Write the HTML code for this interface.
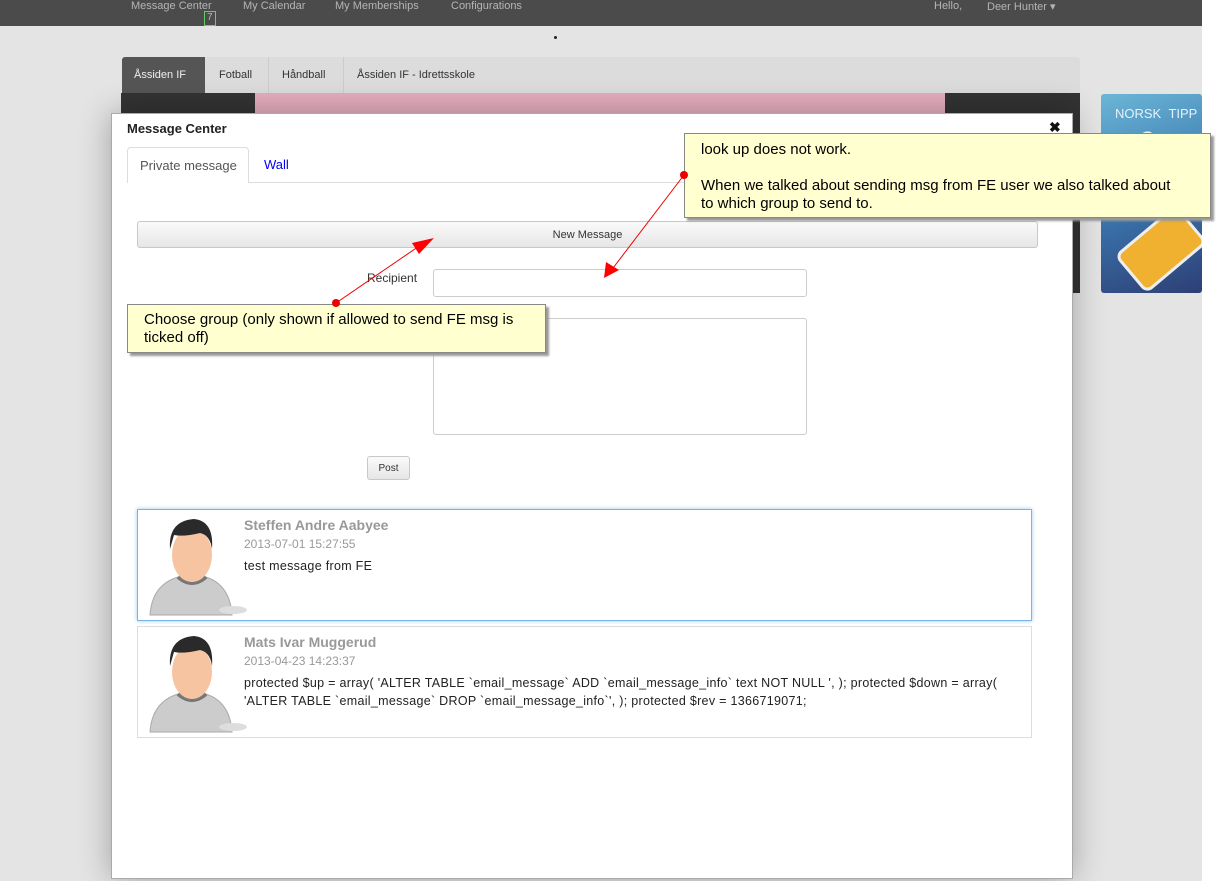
<!DOCTYPE html>
<html><head><meta charset="utf-8"><style>
*{box-sizing:border-box;margin:0;padding:0}
body{width:1221px;height:881px;overflow:hidden;background:#e4e4e4;font-family:"Liberation Sans",sans-serif;position:relative}
.abs{position:absolute}
.top{left:0;top:0;width:1202px;height:26px;background:#4b4b4b;color:#b5b5b5;font-size:11px}
.top span{position:absolute;top:0}
.note{position:absolute;background:#ffffd0;border:1px solid #888;box-shadow:3px 3px 2px #999;font-size:15px;color:#000;line-height:18px}
.btn{border:1px solid #c8c8c8;border-radius:3px;background:linear-gradient(#fafafa,#e6e6e6);font-size:11px;color:#333;text-align:center}
.inp{border:1px solid #ccc;border-radius:3px;background:#fff}
.msg{position:absolute;left:137px;width:895px;border:1px solid #ddd;background:#fff}
.msg .n{position:absolute;left:106px;top:7px;font-weight:bold;color:#999;font-size:14px}
.msg .d{position:absolute;left:106px;top:27px;color:#999;font-size:12px}
.msg .t{position:absolute;left:106px;top:47px;color:#222;font-size:12.5px;letter-spacing:0.3px;line-height:18px;width:790px;white-space:nowrap}
.msg svg{position:absolute;left:10px;top:5px}
</style></head><body>
<div class="abs top">
<span style="left:131px">Message Center</span>
<span style="left:204px;top:11px;border:1px solid #6c6;font-size:10px;padding:0 2px;color:#9c9;height:15px">7</span>
<span style="left:243px">My Calendar</span>
<span style="left:335px">My Memberships</span>
<span style="left:451px">Configurations</span>
<span style="left:934px">Hello,</span>
<span style="left:987px">Deer Hunter ▾</span>
</div>
<div class="abs" style="left:1202px;top:0;width:19px;height:881px;background:#fff"></div>
<div class="abs" style="left:554px;top:36px;width:3px;height:3px;background:#222;border-radius:2px"></div>
<div class="abs" style="left:122px;top:57px;width:958px;height:36px;background:#dcdcdc;border-radius:3px 3px 0 0;font-size:11px;color:#333">
<div class="abs" style="left:0;top:0;width:83px;height:36px;background:#555;color:#eee;border-radius:3px 0 0 0;padding:12px 12px">Åssiden IF</div>
<div class="abs" style="left:97px;top:12px">Fotball</div>
<div class="abs" style="left:146px;top:0;width:1px;height:36px;background:#ccc"></div>
<div class="abs" style="left:160px;top:12px">Håndball</div>
<div class="abs" style="left:221px;top:0;width:1px;height:36px;background:#ccc"></div>
<div class="abs" style="left:235px;top:12px">Åssiden IF - Idrettsskole</div>
</div>
<div class="abs" style="left:121px;top:93px;width:959px;height:200px;background:#333"></div>
<div class="abs" style="left:255px;top:93px;width:690px;height:20px;background:#e5aebf"></div>
<div class="abs" style="left:1101px;top:94px;width:101px;height:199px;border-radius:3px;background:linear-gradient(160deg,#6bb6d6 0%,#3b78b0 50%,#2d3f75 100%);overflow:hidden">
<div class="abs" style="left:14px;top:12px;color:#e8f0f8;font-size:13px">NORSK &nbsp;TIPP</div>
<div class="abs" style="left:15px;top:50px;width:70px;height:60px;background:#9fd4a8;transform:rotate(45deg);border-radius:8px;border:3px solid #eee"></div>
<div class="abs" style="left:20px;top:130px;width:80px;height:50px;background:#f0b030;transform:rotate(-40deg);border-radius:8px;border:3px solid #eee"></div>
</div>
<div class="abs" style="left:111px;top:113px;width:962px;height:766px;background:#fff;border:1px solid #aaa;box-shadow:0 0 30px rgba(0,0,0,.3)"></div>
<div class="abs" style="left:127px;top:121px;font-weight:bold;font-size:13px;color:#222">Message Center</div>
<div class="abs" style="left:1049px;top:119px;font-weight:bold;font-size:14px;color:#111">✖</div>
<div class="abs" style="left:127px;top:182px;width:910px;height:1px;background:#ddd"></div>
<div class="abs" style="left:127px;top:147px;width:122px;height:36px;border:1px solid #ddd;border-bottom:none;background:#fff;border-radius:4px 4px 0 0;font-size:13px;color:#555;padding:10px 12px;white-space:nowrap">Private message</div>
<div class="abs" style="left:264px;top:157px;font-size:13px;color:#00f">Wall</div>
<div class="abs btn" style="left:137px;top:221px;width:901px;height:27px;padding-top:7px">New Message</div>
<div class="abs" style="left:367px;top:271px;font-size:12px;color:#333">Recipient</div>
<div class="abs inp" style="left:433px;top:269px;width:374px;height:28px"></div>
<div class="abs inp" style="left:433px;top:318px;width:374px;height:117px"></div>
<div class="abs btn" style="left:367px;top:456px;width:43px;height:24px;padding-top:6px;font-size:10px">Post</div>
<svg width="0" height="0" style="position:absolute"><defs><g id="av">
<path d="M2 100 Q4 70 30 62 L58 62 Q82 70 84 100 Z" fill="#ccc" stroke="#aaa"/>
<path d="M30 62 Q44 74 58 62" fill="none" stroke="#777" stroke-width="4"/>
<ellipse cx="44" cy="40" rx="20" ry="27" fill="#f6c4a0"/>
<path d="M22 34 Q20 6 46 4 Q66 6 64 34 Q62 20 52 18 Q36 22 26 20 Z" fill="#2a2a2a"/>
<ellipse cx="85" cy="95" rx="14" ry="4" fill="#ddd"/>
</g></defs></svg>
<div class="msg" style="top:509px;height:112px;border-color:#7ab3e8;box-shadow:0 0 4px #9cc8f0">
<svg width="100" height="106"><use href="#av"/></svg>
<div class="n">Steffen Andre Aabyee</div><div class="d">2013-07-01 15:27:55</div><div class="t">test message from FE</div></div>
<div class="msg" style="top:626px;height:112px">
<svg width="100" height="106"><use href="#av"/></svg>
<div class="n">Mats Ivar Muggerud</div><div class="d">2013-04-23 14:23:37</div><div class="t">protected $up = array( 'ALTER TABLE `email_message` ADD `email_message_info` text NOT NULL ', ); protected $down = array(<br>'ALTER TABLE `email_message` DROP `email_message_info`', ); protected $rev = 1366719071;</div></div>
<div class="note" style="left:684px;top:133px;width:527px;height:85px;padding:7px 16px">look up does not work.<br><br>When we talked about sending msg from FE user we also talked about<br>to which group to send to.</div>
<div class="note" style="left:127px;top:304px;width:419px;height:49px;padding:6px 16px">Choose group (only shown if allowed to send FE msg is ticked off)</div>
<svg class="abs" style="left:0;top:0" width="1221" height="881">
<line x1="684" y1="175" x2="610" y2="272" stroke="#e00" stroke-width="1"/>
<polygon points="604,278 606,262 619,270" fill="#f00"/>
<circle cx="684" cy="175" r="4" fill="#e00"/>
<line x1="336" y1="303" x2="428" y2="240" stroke="#e00" stroke-width="1"/>
<polygon points="434,238 419,254 412,243" fill="#f00"/>
<circle cx="336" cy="303" r="4" fill="#e00"/>
</svg>
</body></html>
